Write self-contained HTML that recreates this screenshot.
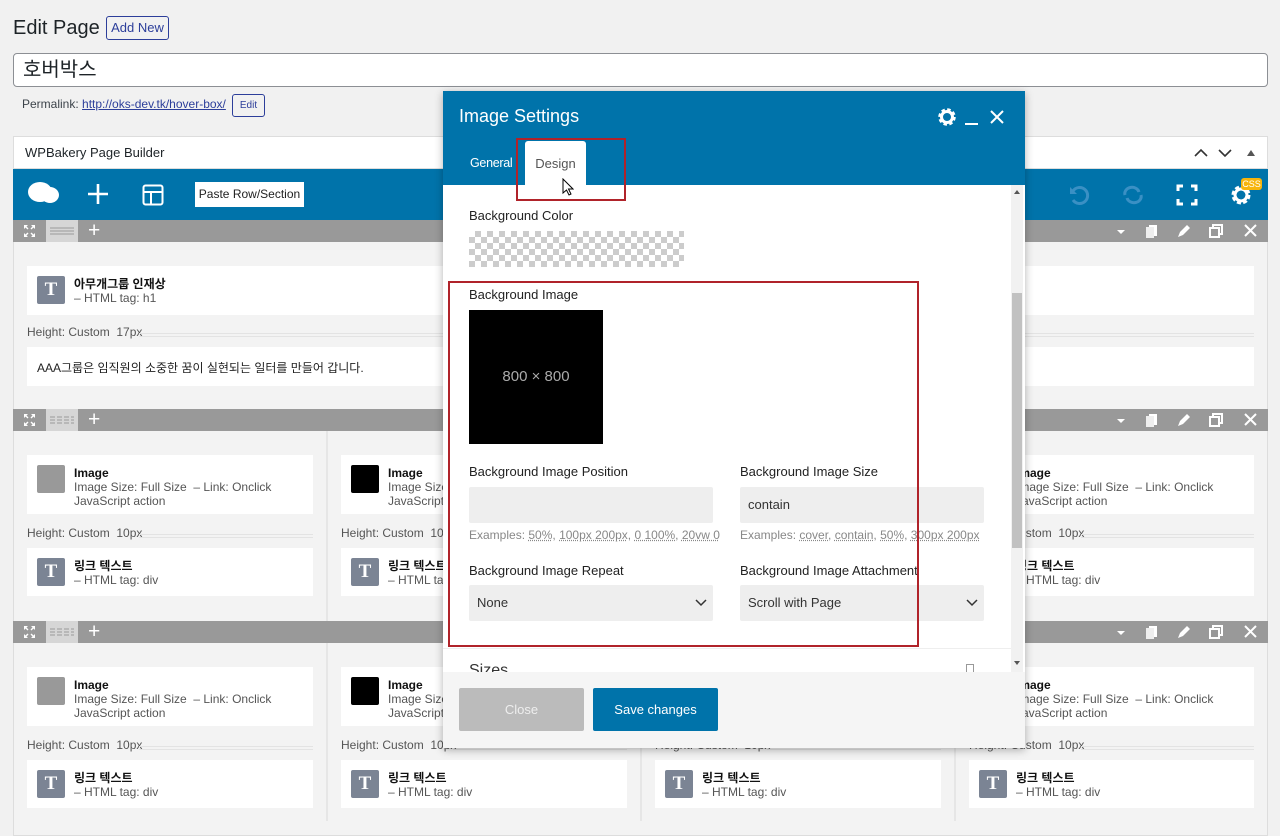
<!DOCTYPE html>
<html><head><meta charset="utf-8">
<style>
*{box-sizing:border-box;margin:0;padding:0}
body{width:1280px;height:821px;overflow:hidden;background:#f1f1f1;font-family:"Liberation Sans","Noto Sans CJK KR",sans-serif;color:#1d2327;position:relative}
.a{position:absolute}
.bar{position:absolute;left:13px;width:1255px;height:22px;background:#999}
.bar .mv{position:absolute;left:0;top:0;width:33px;height:22px}
.bar .ly{position:absolute;left:33px;top:0;width:32px;height:22px;background:#d6d6d6}
.bar .pl{position:absolute;left:75px;top:-1px;color:#fff;font-size:21px;line-height:24px}
.el{position:absolute;background:#fff}
.ic{position:absolute;left:10px;width:28px;height:28px;border-radius:2px;background:#7b8494;color:#fff;font-family:"Liberation Serif",serif;font-weight:bold;font-size:19px;text-align:center;line-height:28px}
.t1{position:absolute;left:47px;font-size:12px;color:#111;font-weight:bold}
.t2{position:absolute;left:47px;font-size:12px;color:#555;line-height:14px}
.hl{position:absolute;font-size:12px;color:#555}
.hl i{position:absolute;top:8px;height:4px;border-top:1px solid #e3e3e3;border-bottom:1px solid #e3e3e3}
.lbl{position:absolute;font-size:13px;color:#222}
.inp{position:absolute;background:#eee;border-radius:2px;font-size:13px;color:#333;padding:0 8px;line-height:36px}
.ex{position:absolute;font-size:12px;color:#888}
.ex u{text-decoration:underline dotted}
</style></head><body>

<div class="a" style="left:13px;top:17px;font-size:20px;color:#1d2327">Edit Page</div>
<div class="a" style="left:106px;top:16px;width:63px;height:24px;border:1px solid #2c3e9a;border-radius:3px;color:#2c3e9a;font-size:13px;text-align:center;line-height:22px">Add New</div>
<div class="a" style="left:13px;top:53px;width:1255px;height:34px;background:#fff;border:1px solid #8c8f94;border-radius:4px;font-size:20px;padding-left:9px;line-height:32px">호버박스</div>
<div class="a" style="left:22px;top:97px;font-size:12px;color:#3c434a">Permalink: <span style="color:#2c3e9a;text-decoration:underline">http://oks-dev.tk/hover-box/</span></div>
<div class="a" style="left:232px;top:94px;width:33px;height:23px;border:1px solid #2c3e9a;border-radius:3px;color:#2c3e9a;font-size:10px;text-align:center;line-height:21px">Edit</div>

<div class="a" style="left:13px;top:136px;width:1255px;height:700px;background:#f3f3f3;border:1px solid #ddd"></div>
<div class="a" style="left:13px;top:136px;width:1255px;height:33px;background:#fff;border:1px solid #ddd"></div>
<div class="a" style="left:25px;top:145px;font-size:13px;color:#1d2327">WPBakery Page Builder</div>
<svg class="a" style="left:1190px;top:146px" width="70" height="14"><path d="M5 10l6-6 6 6M29 4l6 6 6-6" stroke="#333" stroke-width="1.6" fill="none"/><path d="M57 10l4-6 4 6z" fill="#555"/></svg>
<div class="a" style="left:13px;top:169px;width:1255px;height:51px;background:#0073aa"></div>
<svg class="a" style="left:26px;top:180px" width="36" height="28"><ellipse cx="14" cy="12" rx="12" ry="10" fill="#fff"/><ellipse cx="24" cy="15" rx="9" ry="8" fill="#fff"/></svg>
<svg class="a" style="left:87px;top:183px" width="22" height="22"><path d="M11 1v20M1 11h20" stroke="#fff" stroke-width="2.6"/></svg>
<svg class="a" style="left:142px;top:184px" width="22" height="22"><rect x="1.5" y="1.5" width="19" height="19" rx="2" stroke="#fff" stroke-width="2" fill="none"/><path d="M1.5 8h19M9 8v12" stroke="#fff" stroke-width="2"/></svg>
<div class="a" style="left:195px;top:182px;width:109px;height:25px;background:#fff;font-size:12px;color:#222;text-align:center;line-height:25px">Paste Row/Section</div>
<svg class="a" style="left:1067px;top:183px" width="24" height="24"><path d="M6 8a8 8 0 1 1 0 9" stroke="#3a90c4" stroke-width="3" fill="none"/><path d="M3 4v7h7" fill="#3a90c4"/></svg>
<svg class="a" style="left:1121px;top:183px" width="24" height="24"><path d="M4 12a7 6 0 0 1 14-3M20 12a7 6 0 0 1-14 3" stroke="#3a90c4" stroke-width="3" fill="none"/></svg>
<svg class="a" style="left:1176px;top:184px" width="22" height="22"><path d="M2 7V2h5M15 2h5v5M20 15v5h-5M7 20H2v-5" stroke="#fff" stroke-width="3" fill="none"/></svg>
<svg class="a" style="left:1229px;top:183px" width="24" height="24"><circle cx="12" cy="12" r="7" stroke="#fff" stroke-width="5" stroke-dasharray="3.5 2" fill="none"/><circle cx="12" cy="12" r="6" stroke="#fff" stroke-width="3" fill="none"/></svg>
<div class="a" style="left:1241px;top:178px;width:21px;height:12px;background:#f7b50c;border-radius:3px;color:#fff;font-size:9px;text-align:center;line-height:12px">CSS</div>

<div class="bar" style="top:220px"><svg class="mv" viewBox="0 0 33 22"><path d="M11 5l4 0-1.5 1.5 2 2-1 1-2-2L11 9zM22 5v4l-1.5-1.5-2 2-1-1 2-2L18 5zM11 17v-4l1.5 1.5 2-2 1 1-2 2L15 17zM22 17h-4l1.5-1.5-2-2 1-1 2 2L22 13z" fill="#fff"/></svg><div class="ly"><svg width="32" height="22"><path d="M4 8h24M4 11h24M4 14h24" stroke="#999"/></svg></div><div class="pl">+</div></div>
<div class="bar" style="top:409px"><svg class="mv" viewBox="0 0 33 22"><path d="M11 5l4 0-1.5 1.5 2 2-1 1-2-2L11 9zM22 5v4l-1.5-1.5-2 2-1-1 2-2L18 5zM11 17v-4l1.5 1.5 2-2 1 1-2 2L15 17zM22 17h-4l1.5-1.5-2-2 1-1 2 2L22 13z" fill="#fff"/></svg><div class="ly"><svg width="32" height="22"><path d="M4 8h24M4 11h24M4 14h24" stroke="#999" stroke-dasharray="5 2"/></svg></div><div class="pl">+</div></div>
<div class="bar" style="top:621px"><svg class="mv" viewBox="0 0 33 22"><path d="M11 5l4 0-1.5 1.5 2 2-1 1-2-2L11 9zM22 5v4l-1.5-1.5-2 2-1-1 2-2L18 5zM11 17v-4l1.5 1.5 2-2 1 1-2 2L15 17zM22 17h-4l1.5-1.5-2-2 1-1 2 2L22 13z" fill="#fff"/></svg><div class="ly"><svg width="32" height="22"><path d="M4 8h24M4 11h24M4 14h24" stroke="#999" stroke-dasharray="5 2"/></svg></div><div class="pl">+</div></div>
<svg class="a" style="left:1110px;top:222px" width="150" height="18"><path d="M7 8l4 4 4-4z" fill="#fff"/><rect x="39" y="3" width="8" height="11" fill="#fff"/><rect x="36" y="5" width="8" height="11" fill="#eee"/><path d="M68 15l2-5 7-7 3 3-7 7z" fill="#fff"/><rect x="103" y="3" width="9" height="9" stroke="#fff" stroke-width="2" fill="none"/><rect x="100" y="6" width="9" height="9" stroke="#fff" stroke-width="2" fill="#999"/><path d="M135 3l11 11M146 3l-11 11" stroke="#fff" stroke-width="2"/></svg>
<svg class="a" style="left:1110px;top:411px" width="150" height="18"><path d="M7 8l4 4 4-4z" fill="#fff"/><rect x="39" y="3" width="8" height="11" fill="#fff"/><rect x="36" y="5" width="8" height="11" fill="#eee"/><path d="M68 15l2-5 7-7 3 3-7 7z" fill="#fff"/><rect x="103" y="3" width="9" height="9" stroke="#fff" stroke-width="2" fill="none"/><rect x="100" y="6" width="9" height="9" stroke="#fff" stroke-width="2" fill="#999"/><path d="M135 3l11 11M146 3l-11 11" stroke="#fff" stroke-width="2"/></svg>
<svg class="a" style="left:1110px;top:623px" width="150" height="18"><path d="M7 8l4 4 4-4z" fill="#fff"/><rect x="39" y="3" width="8" height="11" fill="#fff"/><rect x="36" y="5" width="8" height="11" fill="#eee"/><path d="M68 15l2-5 7-7 3 3-7 7z" fill="#fff"/><rect x="103" y="3" width="9" height="9" stroke="#fff" stroke-width="2" fill="none"/><rect x="100" y="6" width="9" height="9" stroke="#fff" stroke-width="2" fill="#999"/><path d="M135 3l11 11M146 3l-11 11" stroke="#fff" stroke-width="2"/></svg>

<div class="el" style="left:27px;top:266px;width:1227px;height:49px"><div class="ic" style="top:10px">T</div><div class="t1" style="top:9px">아무개그룹 인재상</div><div class="t2" style="top:25px">– HTML tag: h1</div></div>
<div class="hl" style="left:27px;top:325px;width:1227px">Height: Custom &nbsp;17px<i style="left:112px;right:0"></i></div>
<div class="el" style="left:27px;top:347px;width:1227px;height:39px"><div class="a" style="left:10px;top:12px;font-size:12px;color:#222">AAA그룹은 임직원의 소중한 꿈이 실현되는 일터를 만들어 갑니다.</div></div>

<div class="a" style="left:326px;top:431px;width:2px;height:190px;background:#e6e6e6"></div>
<div class="a" style="left:640px;top:431px;width:2px;height:190px;background:#e6e6e6"></div>
<div class="a" style="left:954px;top:431px;width:2px;height:190px;background:#e6e6e6"></div>
<div class="a" style="left:326px;top:643px;width:2px;height:178px;background:#e6e6e6"></div>
<div class="a" style="left:640px;top:643px;width:2px;height:178px;background:#e6e6e6"></div>
<div class="a" style="left:954px;top:643px;width:2px;height:178px;background:#e6e6e6"></div>

<div class="el" style="left:27px;top:455px;width:286px;height:59px"><div class="ic" style="top:10px;background:#999"></div><div class="t1" style="top:11px">Image</div><div class="t2" style="top:25px">Image Size: Full Size &nbsp;– Link: Onclick<br>JavaScript action</div></div>
<div class="hl" style="left:27px;top:526px;width:286px">Height: Custom &nbsp;10px<i style="left:112px;right:0"></i></div>
<div class="el" style="left:27px;top:548px;width:286px;height:48px"><div class="ic" style="top:10px">T</div><div class="t1" style="top:9px">링크 텍스트</div><div class="t2" style="top:25px">– HTML tag: div</div></div>

<div class="el" style="left:341px;top:455px;width:286px;height:59px"><div class="ic" style="top:10px;background:#000"></div><div class="t1" style="top:11px">Image</div><div class="t2" style="top:25px">Image Size: Full Size &nbsp;– Link: Onclick<br>JavaScript action</div></div>
<div class="hl" style="left:341px;top:526px;width:286px">Height: Custom &nbsp;10px<i style="left:112px;right:0"></i></div>
<div class="el" style="left:341px;top:548px;width:286px;height:48px"><div class="ic" style="top:10px">T</div><div class="t1" style="top:9px">링크 텍스트</div><div class="t2" style="top:25px">– HTML tag: div</div></div>

<div class="el" style="left:969px;top:455px;width:285px;height:59px"><div class="ic" style="top:10px;background:#999"></div><div class="t1" style="top:11px">Image</div><div class="t2" style="top:25px">Image Size: Full Size &nbsp;– Link: Onclick<br>JavaScript action</div></div>
<div class="hl" style="left:969px;top:526px;width:285px">Height: Custom &nbsp;10px<i style="left:112px;right:0"></i></div>
<div class="el" style="left:969px;top:548px;width:285px;height:48px"><div class="ic" style="top:10px">T</div><div class="t1" style="top:9px">링크 텍스트</div><div class="t2" style="top:25px">– HTML tag: div</div></div>

<div class="el" style="left:27px;top:667px;width:286px;height:59px"><div class="ic" style="top:10px;background:#999"></div><div class="t1" style="top:11px">Image</div><div class="t2" style="top:25px">Image Size: Full Size &nbsp;– Link: Onclick<br>JavaScript action</div></div>
<div class="hl" style="left:27px;top:738px;width:286px">Height: Custom &nbsp;10px<i style="left:112px;right:0"></i></div>
<div class="el" style="left:27px;top:760px;width:286px;height:48px"><div class="ic" style="top:10px">T</div><div class="t1" style="top:9px">링크 텍스트</div><div class="t2" style="top:25px">– HTML tag: div</div></div>

<div class="el" style="left:341px;top:667px;width:286px;height:59px"><div class="ic" style="top:10px;background:#000"></div><div class="t1" style="top:11px">Image</div><div class="t2" style="top:25px">Image Size: Full Size &nbsp;– Link: Onclick<br>JavaScript action</div></div>
<div class="hl" style="left:341px;top:738px;width:286px">Height: Custom &nbsp;10px<i style="left:112px;right:0"></i></div>
<div class="el" style="left:341px;top:760px;width:286px;height:48px"><div class="ic" style="top:10px">T</div><div class="t1" style="top:9px">링크 텍스트</div><div class="t2" style="top:25px">– HTML tag: div</div></div>

<div class="hl" style="left:655px;top:738px;width:286px">Height: Custom &nbsp;10px<i style="left:112px;right:0"></i></div>
<div class="el" style="left:655px;top:760px;width:286px;height:48px"><div class="ic" style="top:10px">T</div><div class="t1" style="top:9px">링크 텍스트</div><div class="t2" style="top:25px">– HTML tag: div</div></div>

<div class="el" style="left:969px;top:667px;width:285px;height:59px"><div class="ic" style="top:10px;background:#999"></div><div class="t1" style="top:11px">Image</div><div class="t2" style="top:25px">Image Size: Full Size &nbsp;– Link: Onclick<br>JavaScript action</div></div>
<div class="hl" style="left:969px;top:738px;width:285px">Height: Custom &nbsp;10px<i style="left:112px;right:0"></i></div>
<div class="el" style="left:969px;top:760px;width:285px;height:48px"><div class="ic" style="top:10px">T</div><div class="t1" style="top:9px">링크 텍스트</div><div class="t2" style="top:25px">– HTML tag: div</div></div>

<div class="a" style="left:443px;top:91px;width:582px;height:657px;background:#fff;box-shadow:0 2px 8px rgba(0,0,0,.3)"></div>
<div class="a" style="left:443px;top:91px;width:582px;height:94px;background:#0073aa"></div>
<div class="a" style="left:459px;top:106px;font-size:18px;color:#fff">Image Settings</div>
<svg class="a" style="left:936px;top:106px" width="76" height="22"><circle cx="11" cy="11" r="6.5" stroke="#fff" stroke-width="4.5" stroke-dasharray="3 2.1" fill="none"/><circle cx="11" cy="11" r="5.5" stroke="#fff" stroke-width="3" fill="none"/><path d="M29 18h13" stroke="#fff" stroke-width="2"/><path d="M55 5l12 12M67 5l-12 12" stroke="#fff" stroke-width="2"/></svg>
<div class="a" style="left:470px;top:156px;font-size:12.5px;color:#fff;letter-spacing:-0.3px">General</div>
<div class="a" style="left:525px;top:141px;width:61px;height:44px;background:#fff;border-radius:3px 3px 0 0;font-size:13px;color:#555;text-align:center;padding-top:15px">Design</div>
<svg class="a" style="left:562px;top:178px" width="12" height="18"><path d="M1 1v14l3.5-3 2.5 5 2-1-2.5-5H11z" fill="#fff" stroke="#000"/></svg>

<div class="a" style="left:1011px;top:185px;width:12px;height:487px;background:#f1f1f1"></div>
<div class="a" style="left:1012px;top:293px;width:10px;height:255px;background:#c1c1c1"></div>
<svg class="a" style="left:1013px;top:188px" width="8" height="480"><path d="M1 6l3-4 3 4z" fill="#555"/><path d="M1 473l3 4 3-4z" fill="#555"/></svg>

<div class="lbl" style="left:469px;top:208px">Background Color</div>
<div class="a" style="left:469px;top:231px;width:215px;height:36px;background-color:#fff;background-image:linear-gradient(45deg,#ccc 25%,transparent 25%,transparent 75%,#ccc 75%),linear-gradient(45deg,#ccc 25%,transparent 25%,transparent 75%,#ccc 75%);background-size:12px 12px;background-position:0 0,6px 6px"></div>

<div class="lbl" style="left:469px;top:287px">Background Image</div>
<div class="a" style="left:469px;top:310px;width:134px;height:134px;background:#000;color:#aaa;font-size:15px;text-align:center;line-height:134px">800 × 800</div>

<div class="lbl" style="left:469px;top:464px">Background Image Position</div>
<div class="inp" style="left:469px;top:487px;width:244px;height:36px"></div>
<div class="ex" style="left:469px;top:528px">Examples: <u>50%</u>, <u>100px 200px</u>, <u>0 100%</u>, <u>20vw 0</u></div>
<div class="lbl" style="left:740px;top:464px">Background Image Size</div>
<div class="inp" style="left:740px;top:487px;width:244px;height:36px">contain</div>
<div class="ex" style="left:740px;top:528px">Examples: <u>cover</u>, <u>contain</u>, <u>50%</u>, <u>300px 200px</u></div>

<div class="lbl" style="left:469px;top:563px">Background Image Repeat</div>
<div class="inp" style="left:469px;top:585px;width:244px;height:36px">None</div>
<div class="lbl" style="left:740px;top:563px">Background Image Attachment</div>
<div class="inp" style="left:740px;top:585px;width:244px;height:36px">Scroll with Page</div>
<svg class="a" style="left:695px;top:599px" width="12" height="8"><path d="M1 1l5 5 5-5" stroke="#333" stroke-width="1.5" fill="none"/></svg>
<svg class="a" style="left:966px;top:599px" width="12" height="8"><path d="M1 1l5 5 5-5" stroke="#333" stroke-width="1.5" fill="none"/></svg>

<div class="a" style="left:443px;top:648px;width:568px;height:1px;background:#eee"></div>
<div class="a" style="left:469px;top:660px;width:100px;height:12px;overflow:hidden;font-size:16px;color:#333;line-height:22px">Sizes</div>
<div class="a" style="left:966px;top:664px;width:8px;height:8px;border:1px solid #999;border-bottom:0"></div>

<div class="a" style="left:443px;top:672px;width:582px;height:76px;background:#f5f5f5"></div>
<div class="a" style="left:459px;top:688px;width:125px;height:43px;background:#bbb;border-radius:2px;color:#eee;font-size:13px;text-align:center;line-height:43px">Close</div>
<div class="a" style="left:593px;top:688px;width:125px;height:43px;background:#0073aa;border-radius:2px;color:#fff;font-size:13px;text-align:center;line-height:43px">Save changes</div>

<div class="a" style="left:516px;top:138px;width:110px;height:63px;border:2px solid #b0232a"></div>
<div class="a" style="left:448px;top:281px;width:471px;height:366px;border:2px solid #b0232a"></div>

</body></html>
